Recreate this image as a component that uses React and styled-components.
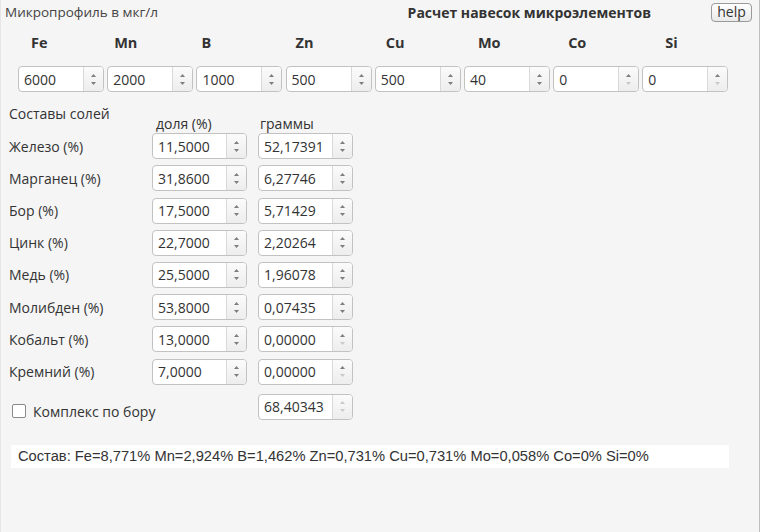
import React from "react";
import styled, { createGlobalStyle } from "styled-components";

const Global = createGlobalStyle`
  html, body { margin: 0; padding: 0; background: #ffffff; }
  body { font-family: "Open Sans", "DejaVu Sans", sans-serif; color: #333; }
`;

const Panel = styled.div`
  width: 760px;
  height: 532px;
  box-sizing: border-box;
  background: #f5f5f5;
  border-left: 1px solid #e6e6e6;
  border-right: 1px solid #bdbdbd;
  padding: 0 0 0 4px;
  font-size: 13px;
`;

const Header = styled.div`
  display: flex;
  align-items: center;
  height: 24px;
  padding-right: 7px;
`;

const Title = styled.div`
  flex: 1;
  font-size: 13.5px;
  color: #444;
`;

const MainTitle = styled.div`
  font-weight: bold;
  font-size: 14px;
  color: #333;
  margin-right: 60px;
`;

const HelpButton = styled.button`
  height: 19px;
  width: 41px;
  padding: 0;
  font-family: inherit;
  font-size: 14px;
  color: #333;
  border: 1px solid #9a9a9a;
  border-radius: 4px;
  background: linear-gradient(#ffffff, #e9e9e9);
  line-height: 16px;
`;

const ElemRow = styled.div`
  display: grid;
  grid-template-columns: repeat(8, 86px);
  column-gap: 3.2px;
  padding-left: 13px;
`;

const ElemLabel = styled.div`
  font-weight: bold;
  font-size: 14.5px;
  height: 38px;
  line-height: 38px;
  padding-left: ${(p) => p.$off}px;
  margin-bottom: 4px;
`;

const Field = styled.div`
  display: flex;
  width: ${(p) => p.$w}px;
  height: ${(p) => p.$h}px;
  box-sizing: border-box;
  border: 1px solid #c2c2c2;
  border-radius: 4px;
  background: #fff;
  overflow: hidden;
`;

const FieldValue = styled.div`
  flex: 1;
  padding-left: 5px;
  font-size: 14px;
  color: #333;
  display: flex;
  align-items: center;
`;

const Spinner = styled.div`
  width: 19px;
  border-left: 1px solid #d9d9d9;
  background: linear-gradient(#fbfbfb, #ededed);
  display: flex;
  flex-direction: column;
  align-items: center;
  justify-content: center;
  gap: 5px;
`;

const Arrow = ({ up, light }) => (
  <svg width="5" height="3" viewBox="0 0 5 3">
    <path
      d={up ? "M0 3 L2.5 0 L5 3 Z" : "M0 0 L2.5 3 L5 0 Z"}
      fill={light ? "#c9c9c9" : "#7d7d7d"}
    />
  </svg>
);

const NumField = ({ value, w = 86, h = 26, upLight, downLight }) => (
  <Field $w={w} $h={h}>
    <FieldValue>{value}</FieldValue>
    <Spinner>
      <Arrow up light={upLight} />
      <Arrow light={downLight} />
    </Spinner>
  </Field>
);

const Salts = styled.div`
  display: grid;
  grid-template-columns: 132px 95px 95px;
  column-gap: 11px;
  row-gap: 6.2px;
  padding-left: 4px;
  margin-top: 9px;
  align-items: center;
`;

const SaltsTitle = styled.div`
  font-size: 14px;
  align-self: start;
  height: 26px;
  box-sizing: border-box;
  padding-top: 3px;
`;

const ColHead = styled.div`
  align-self: end;
  font-size: 14px;
  padding-left: ${(p) => p.$off}px;
  margin-bottom: -6px;
`;

const RowLabel = styled.div`
  font-size: 14px;
`;

const CheckWrap = styled.label`
  grid-column: span 2;
  align-self: start;
  display: flex;
  align-items: center;
  gap: 7px;
  padding-left: 3px;
  font-size: 14px;
  line-height: 19px;
  white-space: nowrap;
  margin-top: 11px;
`;

const Box = styled.span`
  width: 12px;
  height: 12px;
  border: 1px solid #8a8a8a;
  border-radius: 2px;
  background: #fff;
`;

const TotalCell = styled.div`
  align-self: start;
  margin-top: 3px;
`;

const Result = styled.div`
  margin: 24px 0 0 6px;
  width: 718px;
  height: 23px;
  background: #fff;
  font-family: "Liberation Sans", Arial, sans-serif;
  font-size: 14.7px;
  color: #333;
  display: flex;
  align-items: center;
  padding-left: 7px;
  box-sizing: border-box;
`;

const elems = [
  ["Fe", 13, "6000"],
  ["Mn", 7, "2000"],
  ["B", 5, "1000"],
  ["Zn", 10, "500"],
  ["Cu", 11, "500"],
  ["Mo", 14, "40"],
  ["Co", 15, "0"],
  ["Si", 23, "0"],
];

const salts = [
  ["Железо (%)", "11,5000", "52,17391"],
  ["Марганец (%)", "31,8600", "6,27746"],
  ["Бор (%)", "17,5000", "5,71429"],
  ["Цинк (%)", "22,7000", "2,20264"],
  ["Медь (%)", "25,5000", "1,96078"],
  ["Молибден (%)", "53,8000", "0,07435"],
  ["Кобальт (%)", "13,0000", "0,00000"],
  ["Кремний (%)", "7,0000", "0,00000"],
];

export default function App() {
  return (
    <>
      <Global />
      <Panel>
        <Header>
          <Title>Микропрофиль в мкг/л</Title>
          <MainTitle>Расчет навесок микроэлементов</MainTitle>
          <HelpButton>help</HelpButton>
        </Header>
        <ElemRow>
          {elems.map(([n, off]) => (
            <ElemLabel key={n} $off={off}>{n}</ElemLabel>
          ))}
        </ElemRow>
        <ElemRow>
          {elems.map(([n, , v]) => (
            <NumField key={n} value={v} downLight={v === "0"} />
          ))}
        </ElemRow>
        <Salts>
          <SaltsTitle>Составы солей</SaltsTitle>
          <ColHead $off={4}>доля (%)</ColHead>
          <ColHead $off={2}>граммы</ColHead>
          {salts.map(([l, a, b]) => (
            <React.Fragment key={l}>
              <RowLabel>{l}</RowLabel>
              <NumField value={a} w={95} />
              <NumField value={b} w={95} downLight={b === "0,00000"} />
            </React.Fragment>
          ))}
          <CheckWrap>
            <Box />
            Комплекс по бору
          </CheckWrap>
          <TotalCell>
            <NumField value="68,40343" w={95} upLight downLight />
          </TotalCell>
        </Salts>
        <Result>
          Состав: Fe=8,771% Mn=2,924% B=1,462% Zn=0,731% Cu=0,731% Mo=0,058% Co=0% Si=0%
        </Result>
      </Panel>
    </>
  );
}
